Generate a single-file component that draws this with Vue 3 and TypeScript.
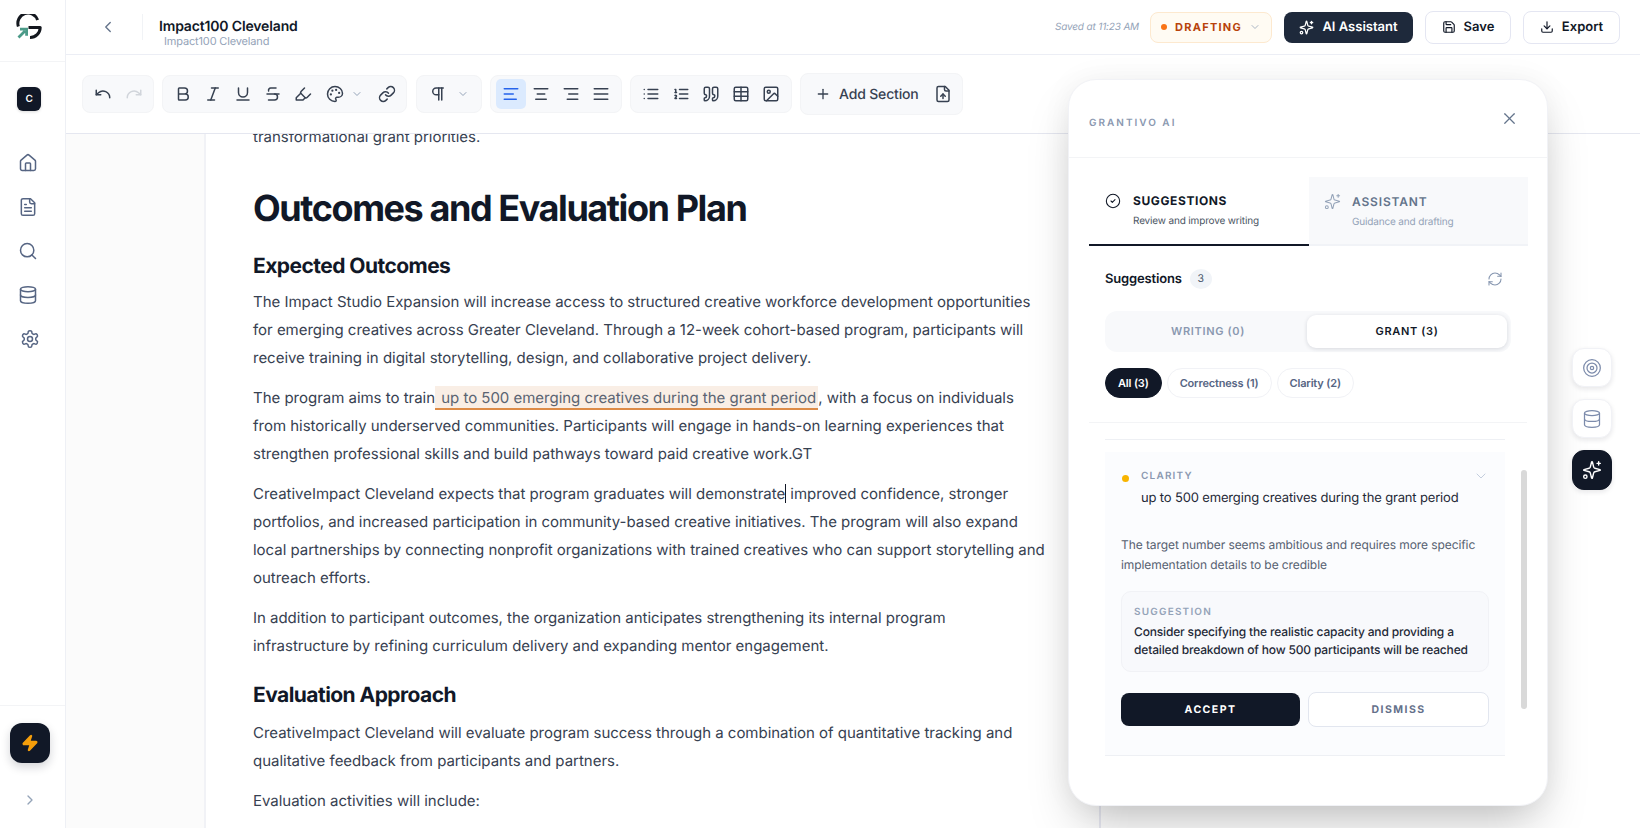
<script setup lang="ts">
import { h } from 'vue'

const c = (cx: number, cy: number, r: number) =>
  `M${cx - r} ${cy}a${r} ${r} 0 1 0 ${2 * r} 0a${r} ${r} 0 1 0 ${-2 * r} 0`

const sparkle = [
  'M9.937 15.5A2 2 0 0 0 8.5 14.063l-6.135-1.582a.5.5 0 0 1 0-.962L8.5 9.936A2 2 0 0 0 9.937 8.5l1.582-6.135a.5.5 0 0 1 .963 0L14.063 8.5A2 2 0 0 0 15.5 9.937l6.135 1.581a.5.5 0 0 1 0 .964L15.5 14.063a2 2 0 0 0-1.437 1.437l-1.582 6.135a.5.5 0 0 1-.963 0z',
  'M20 2v4', 'M22 4h-4', c(4, 20, 2),
]
const database = ['M3 5a9 3 0 1 0 18 0a9 3 0 1 0-18 0', 'M3 5V19A9 3 0 0 0 21 19V5', 'M3 12A9 3 0 0 0 21 12']

const icons: Record<string, string[]> = {
  undo: ['M3 7v6h6', 'M21 17a9 9 0 0 0-15-6.7L3 13'],
  redo: ['M21 7v6h-6', 'M3 17a9 9 0 0 1 15-6.7L21 13'],
  bold: ['M6 12h9a4 4 0 0 1 0 8H7a1 1 0 0 1-1-1V5a1 1 0 0 1 1-1h7a4 4 0 0 1 0 8'],
  italic: ['M19 4h-9', 'M14 20H5', 'M15 4 9 20'],
  underline: ['M6 4v6a6 6 0 0 0 12 0V4', 'M4 20h16'],
  strike: ['M16 4H9a3 3 0 0 0-2.83 4', 'M14 12a4 4 0 0 1 0 8H6', 'M4 12h16'],
  highlight: ['m9 11-6 6v3h9l3-3', 'm22 12-4.6 4.6a2 2 0 0 1-2.8 0l-5.2-5.2a2 2 0 0 1 0-2.8L14 4'],
  palette: [
    'M12 2C6.5 2 2 6.5 2 12s4.5 10 10 10c.926 0 1.648-.746 1.648-1.688 0-.437-.18-.835-.437-1.125-.29-.289-.438-.652-.438-1.125a1.64 1.64 0 0 1 1.668-1.668h1.996c3.051 0 5.555-2.503 5.555-5.554C21.965 6.012 17.461 2 12 2z',
    c(13.5, 6.5, 0.5), c(17.5, 10.5, 0.5), c(8.5, 7.5, 0.5), c(6.5, 12.5, 0.5),
  ],
  link: ['M10 13a5 5 0 0 0 7.54.54l3-3a5 5 0 0 0-7.07-7.07l-1.72 1.71', 'M14 11a5 5 0 0 0-7.54-.54l-3 3a5 5 0 0 0 7.07 7.07l1.71-1.71'],
  pilcrow: ['M13 4v16', 'M17 4v16', 'M19 4H9.5a4.5 4.5 0 0 0 0 9H13'],
  alignLeft: ['M3 5h18', 'M3 12h12', 'M3 19h16'],
  alignCenter: ['M3 5h18', 'M7 12h10', 'M5 19h14'],
  alignRight: ['M3 5h18', 'M9 12h12', 'M7 19h14'],
  alignJustify: ['M3 5h18', 'M3 12h18', 'M3 19h18'],
  list: ['M3 12h.01', 'M3 18h.01', 'M3 6h.01', 'M8 12h13', 'M8 18h13', 'M8 6h13'],
  ordered: ['M10 12h11', 'M10 18h11', 'M10 6h11', 'M4 10h2', 'M4 6h1v4', 'M6 18H4c0-1 2-2 2-3s-1-1.5-2-1'],
  quote: [
    'M16 3a2 2 0 0 0-2 2v6a2 2 0 0 0 2 2 1 1 0 0 1 1 1v1a2 2 0 0 1-2 2 1 1 0 0 0-1 1v2a1 1 0 0 0 1 1 6 6 0 0 0 6-6V5a2 2 0 0 0-2-2z',
    'M5 3a2 2 0 0 0-2 2v6a2 2 0 0 0 2 2 1 1 0 0 1 1 1v1a2 2 0 0 1-2 2 1 1 0 0 0-1 1v2a1 1 0 0 0 1 1 6 6 0 0 0 6-6V5a2 2 0 0 0-2-2z',
  ],
  table: ['M5 3h14a2 2 0 0 1 2 2v14a2 2 0 0 1-2 2H5a2 2 0 0 1-2-2V5a2 2 0 0 1 2-2z', 'M3 9h18', 'M3 15h18', 'M12 3v18'],
  image: ['M5 3h14a2 2 0 0 1 2 2v14a2 2 0 0 1-2 2H5a2 2 0 0 1-2-2V5a2 2 0 0 1 2-2z', c(9, 9, 2), 'm21 15-3.086-3.086a2 2 0 0 0-2.828 0L6 21'],
  plus: ['M5 12h14', 'M12 5v14'],
  fileUp: ['M15 2H6a2 2 0 0 0-2 2v16a2 2 0 0 0 2 2h12a2 2 0 0 0 2-2V7Z', 'M14 2v4a2 2 0 0 0 2 2h4', 'M12 12v6', 'm15 15-3-3-3 3'],
  sparkle,
  database,
  home: ['M15 21v-8a1 1 0 0 0-1-1h-4a1 1 0 0 0-1 1v8', 'M3 10a2 2 0 0 1 .709-1.528l7-5.999a2 2 0 0 1 2.582 0l7 5.999A2 2 0 0 1 21 10v9a2 2 0 0 1-2 2H5a2 2 0 0 1-2-2z'],
  file: ['M15 2H6a2 2 0 0 0-2 2v16a2 2 0 0 0 2 2h12a2 2 0 0 0 2-2V7Z', 'M14 2v4a2 2 0 0 0 2 2h4', 'M10 9H8', 'M16 13H8', 'M16 17H8'],
  search: [c(11, 11, 8), 'm21 21-4.3-4.3'],
  gear: [
    'M12.22 2h-.44a2 2 0 0 0-2 2v.18a2 2 0 0 1-1 1.73l-.43.25a2 2 0 0 1-2 0l-.15-.08a2 2 0 0 0-2.73.73l-.22.38a2 2 0 0 0 .73 2.73l.15.1a2 2 0 0 1 1 1.72v.51a2 2 0 0 1-1 1.74l-.15.09a2 2 0 0 0-.73 2.73l.22.38a2 2 0 0 0 2.73.73l.15-.08a2 2 0 0 1 2 0l.43.25a2 2 0 0 1 1 1.73V20a2 2 0 0 0 2 2h.44a2 2 0 0 0 2-2v-.18a2 2 0 0 1 1-1.73l.43-.25a2 2 0 0 1 2 0l.15.08a2 2 0 0 0 2.73-.73l.22-.39a2 2 0 0 0-.73-2.73l-.15-.08a2 2 0 0 1-1-1.74v-.5a2 2 0 0 1 1-1.74l.15-.09a2 2 0 0 0 .73-2.73l-.22-.38a2 2 0 0 0-2.73-.73l-.15.08a2 2 0 0 1-2 0l-.43-.25a2 2 0 0 1-1-1.73V4a2 2 0 0 0-2-2z',
    c(12, 12, 3),
  ],
  zap: ['M4 14a1 1 0 0 1-.78-1.63l9.9-10.2a.5.5 0 0 1 .86.46l-1.92 6.02A1 1 0 0 0 13 10h7a1 1 0 0 1 .78 1.63l-9.9 10.2a.5.5 0 0 1-.86-.46l1.92-6.02A1 1 0 0 0 11 14z'],
  save: ['M15.2 3a2 2 0 0 1 1.4.6l3.8 3.8a2 2 0 0 1 .6 1.4V19a2 2 0 0 1-2 2H5a2 2 0 0 1-2-2V5a2 2 0 0 1 2-2z', 'M17 21v-7a1 1 0 0 0-1-1H8a1 1 0 0 0-1 1v7', 'M7 3v4a1 1 0 0 0 1 1h7'],
  download: ['M12 15V3', 'M21 15v4a2 2 0 0 1-2 2H5a2 2 0 0 1-2-2v-4', 'm7 10 5 5 5-5'],
  target: [c(12, 12, 10), c(12, 12, 6), c(12, 12, 2)],
  refresh: ['M3 12a9 9 0 0 1 9-9 9.75 9.75 0 0 1 6.74 2.74L21 8', 'M21 3v5h-5', 'M21 12a9 9 0 0 1-9 9 9.75 9.75 0 0 1-6.74-2.74L3 16', 'M8 16H3v5'],
  check: [c(12, 12, 10), 'm9 12 2 2 4-4'],
  x: ['M18 6 6 18', 'm6 6 12 12'],
  left: ['m15 18-6-6 6-6'],
  right: ['m9 18 6-6-6-6'],
  down: ['m6 9 6 6 6-6'],
}

const Icon = (props: { name: string; size?: number; sw?: number; fill?: string }) =>
  h(
    'svg',
    {
      width: props.size ?? 18,
      height: props.size ?? 18,
      viewBox: '0 0 24 24',
      fill: props.fill ?? 'none',
      stroke: 'currentColor',
      'stroke-width': props.sw ?? 2,
      'stroke-linecap': 'round',
      'stroke-linejoin': 'round',
    },
    icons[props.name].map((d) => h('path', { d })),
  )
Icon.props = ['name', 'size', 'sw', 'fill']

const navIcons = ['home', 'file', 'search', 'database', 'gear']
</script>

<template>
  <div class="app">
    <aside class="sidebar">
      <div class="logo-cell">
        <svg width="26" height="26" viewBox="0 0 26 26" fill="none">
          <path d="M2.4 12.5A10 10 0 0 1 21.6 6" stroke="#14181f" stroke-width="3" stroke-linecap="butt" />
          <path d="M12.5 13.5H24.2A10 10 0 0 1 14 23.4" stroke="#14181f" stroke-width="3" stroke-linejoin="round" />
          <path d="M2.5 23.5 9 17M4 15.2h6.6v6.6" stroke="#4b9a88" stroke-width="2.8" stroke-linecap="butt" />
        </svg>
      </div>
      <div class="avatar">C</div>
      <nav class="nav">
        <button v-for="n in navIcons" :key="n" class="nav-btn"><Icon :name="n" :size="20" :sw="1.8" /></button>
      </nav>
      <div class="side-foot">
        <button class="bolt"><Icon name="zap" :size="18" fill="#f59e0b" /></button>
        <button class="expand"><Icon name="right" :size="16" /></button>
      </div>
    </aside>

    <main class="main">
      <header class="topbar">
        <button class="back"><Icon name="left" :size="18" :sw="1.8" /></button>
        <div class="titles">
          <div class="doc-title">Impact100 Cleveland</div>
          <div class="doc-sub">Impact100 Cleveland</div>
        </div>
        <div class="top-actions">
          <span class="saved">Saved at 11:23 AM</span>
          <button class="status"><i class="status-dot"></i>DRAFTING<Icon class="status-chev" name="down" :size="12" :sw="1.6" /></button>
          <button class="btn-dark"><Icon name="sparkle" :size="15" />AI Assistant</button>
          <button class="btn-light"><Icon name="save" :size="14" />Save</button>
          <button class="btn-light export"><Icon name="download" :size="14" />Export</button>
        </div>
      </header>

      <div class="toolbar">
        <div class="group g-history">
          <button class="tb"><Icon name="undo" /></button>
          <button class="tb muted"><Icon name="redo" /></button>
        </div>
        <div class="group g-format">
          <button class="tb"><Icon name="bold" /></button>
          <button class="tb"><Icon name="italic" /></button>
          <button class="tb"><Icon name="underline" /></button>
          <button class="tb"><Icon name="strike" /></button>
          <button class="tb"><Icon name="highlight" /></button>
          <button class="tb wide"><Icon name="palette" /><Icon class="mini" name="down" :size="12" /></button>
          <button class="tb"><Icon name="link" /></button>
        </div>
        <div class="group g-para">
          <button class="tb wide"><Icon name="pilcrow" /><Icon class="mini" name="down" :size="12" /></button>
        </div>
        <div class="group g-align">
          <button class="tb active"><Icon name="alignLeft" /></button>
          <button class="tb"><Icon name="alignCenter" /></button>
          <button class="tb"><Icon name="alignRight" /></button>
          <button class="tb"><Icon name="alignJustify" /></button>
        </div>
        <div class="group g-insert">
          <button class="tb"><Icon name="list" /></button>
          <button class="tb"><Icon name="ordered" /></button>
          <button class="tb"><Icon name="quote" /></button>
          <button class="tb"><Icon name="table" /></button>
          <button class="tb"><Icon name="image" /></button>
        </div>
        <div class="group g-add">
          <button class="add"><Icon name="plus" :size="16" />Add Section</button>
          <button class="tb"><Icon name="fileUp" /></button>
        </div>
      </div>

      <div class="canvas">
        <article class="page">
          <p class="clipped">transformational grant priorities.</p>
          <h1>Outcomes and Evaluation Plan</h1>
          <h2>Expected Outcomes</h2>
          <p>The Impact Studio Expansion will increase access to structured creative workforce development opportunities for emerging creatives across Greater Cleveland. Through a 12-week cohort-based program, participants will receive training in digital storytelling, design, and collaborative project delivery.</p>
          <p>The program aims to train<mark> up to 500 emerging creatives during the grant period</mark>, with a focus on individuals from historically underserved communities. Participants will engage in hands-on learning experiences that strengthen professional skills and build pathways toward paid creative work.GT</p>
          <p>CreativeImpact Cleveland expects that program graduates will demonstrate<span class="caret"></span> improved confidence, stronger portfolios, and increased participation in community-based creative initiatives. The program will also expand local partnerships by connecting nonprofit organizations with trained creatives who can support storytelling and outreach efforts.</p>
          <p>In addition to participant outcomes, the organization anticipates strengthening its internal program infrastructure by refining curriculum delivery and expanding mentor engagement.</p>
          <h2>Evaluation Approach</h2>
          <p>CreativeImpact Cleveland will evaluate program success through a combination of quantitative tracking and qualitative feedback from participants and partners.</p>
          <p>Evaluation activities will include:</p>
        </article>
      </div>
    </main>

    <section class="panel">
      <div class="panel-head">
        <span class="panel-name">GRANTIVO AI</span>
        <button class="panel-close"><Icon name="x" :size="19" :sw="1.5" /></button>
      </div>
      <div class="tabs">
        <div class="tab on">
          <Icon name="check" :size="16" :sw="1.6" />
          <div>
            <div class="tab-title">SUGGESTIONS</div>
            <div class="tab-sub">Review and improve writing</div>
          </div>
        </div>
        <div class="tab off">
          <Icon name="sparkle" :size="17" :sw="1.5" />
          <div>
            <div class="tab-title">ASSISTANT</div>
            <div class="tab-sub">Guidance and drafting</div>
          </div>
        </div>
      </div>
      <div class="pane">
        <div class="sugg-row">
          <span class="sugg-title">Suggestions</span>
          <span class="count">3</span>
          <button class="refresh"><Icon name="refresh" :size="16" :sw="1.6" /></button>
        </div>
        <div class="segment">
          <button class="seg">WRITING (0)</button>
          <button class="seg sel">GRANT (3)</button>
        </div>
        <div class="chips">
          <button class="chip chip-on">All (3)</button>
          <button class="chip">Correctness (1)</button>
          <button class="chip">Clarity (2)</button>
        </div>
      </div>
      <div class="list">
        <div class="scrollbar"></div>
        <div class="card">
          <div class="card-head">
            <i class="dot"></i>
            <div class="card-titles">
              <div class="card-kind">CLARITY</div>
              <div class="card-title">up to 500 emerging creatives during the grant period</div>
            </div>
            <Icon class="card-chev" name="down" :size="16" :sw="1.5" />
          </div>
          <p class="card-desc">The target number seems ambitious and requires more specific implementation details to be credible</p>
          <div class="sugg-box">
            <div class="sugg-label">SUGGESTION</div>
            <div class="sugg-text">Consider specifying the realistic capacity and providing a detailed breakdown of how 500 participants will be reached</div>
          </div>
          <div class="actions">
            <button class="accept">ACCEPT</button>
            <button class="dismiss">DISMISS</button>
          </div>
        </div>
      </div>
    </section>

    <div class="rail">
      <button class="rail-btn"><Icon name="target" :size="20" :sw="1.5" /></button>
      <button class="rail-btn"><Icon name="database" :size="20" :sw="1.5" /></button>
      <button class="rail-btn rail-on"><Icon name="sparkle" :size="20" :sw="1.7" /></button>
    </div>
  </div>
</template>

<style>
html, body { margin: 0; background: #fff; }
</style>

<style scoped>
* { box-sizing: border-box; }
button { font-family: inherit; border: 0; background: none; padding: 0; cursor: pointer; color: inherit; text-rendering: inherit; letter-spacing: inherit; }
.app {
  position: relative; display: flex; width: 1640px; height: 828px; overflow: hidden;
  font-family: Inter, "Liberation Sans", sans-serif; color: #111827; background: #fff;
  text-rendering: geometricPrecision; letter-spacing: -.16px;
}
.sidebar { width: 66px; flex: none; display: flex; flex-direction: column; align-items: center; border-right: 1px solid #eef0f5; background: #fff; }
.logo-cell { width: 100%; height: 62px; display: flex; justify-content: center; padding-top: 14px; border-bottom: 1px solid #f3f4f6; padding-right: 8px; }
.avatar { margin-top: 25px; margin-left: -7px; width: 24px; height: 24px; border-radius: 6px; background: #111827; color: #fff; font-size: 10px; font-weight: 600; display: flex; align-items: center; justify-content: center; box-shadow: 0 1px 3px rgba(0,0,0,.15); }
.nav { margin-top: 42px; margin-left: -8px; display: flex; flex-direction: column; gap: 24px; color: #566583; }
.nav-btn { width: 20px; height: 20px; display: block; }
.nav-btn:last-child { margin-left: 2px; }
.side-foot { margin-top: auto; width: 100%; border-top: 1px solid #f3f4f6; display: flex; flex-direction: column; align-items: center; padding: 17px 6px 0 0; height: 123px; }
.bolt { width: 40px; height: 40px; border-radius: 12px; background: #111827; display: flex; align-items: center; justify-content: center; color: #f59e0b; box-shadow: 0 4px 10px rgba(17,24,39,.18); }
.expand { margin-top: 29px; color: #94a3b8; height: 16px; }

.main { flex: 1; min-width: 0; display: flex; flex-direction: column; }
.topbar { height: 55px; flex: none; display: flex; align-items: center; border-bottom: 1px solid #eceef5; padding-right: 20px; }
.back { width: 18px; height: 18px; margin-left: 33px; color: #64748b; }
.titles { margin-left: 25px; padding: 4px 0 0 16px; border-left: 1px solid #f1f3f6; height: 26px; }
.doc-title { font-size: 14px; font-weight: 600; line-height: 17px; color: #111827; white-space: nowrap; }
.doc-sub { font-size: 11px; line-height: 13px; color: #94a3b8; margin-left: 5px; white-space: nowrap; }
.top-actions { margin-left: auto; display: flex; align-items: center; }
.saved { font-size: 10px; font-style: italic; color: #94a3b8; margin-right: 11px; }
.status { height: 31px; width: 122px; display: flex; align-items: center; border: 1px solid #fde9cf; background: #fffbf3; border-radius: 8px; font-size: 11px; font-weight: 700; letter-spacing: .115em; color: #b8430b; padding-left: 10px; margin-right: 12px; }
.status-dot { width: 6px; height: 6px; border-radius: 50%; background: #f97316; margin-right: 8px; }
.status-chev { margin-left: 7px; color: #94a3b8; }
.btn-dark { height: 31px; width: 129px; border-radius: 8px; background: #1e293b; color: #fff; font-size: 13px; font-weight: 600; letter-spacing: 0; display: flex; align-items: center; justify-content: center; gap: 8px; margin-right: 12px; }
.btn-light { height: 33px; width: 86px; border: 1px solid #e4e6f2; border-radius: 8px; background: #fff; color: #111827; font-size: 13px; font-weight: 600; letter-spacing: 0; display: flex; align-items: center; justify-content: center; gap: 8px; margin-right: 12px; }
.export { width: 97px; margin-right: 0; }

.toolbar { height: 79px; flex: none; display: flex; align-items: center; gap: 8px; padding-left: 16px; border-bottom: 1px solid #e5e7f0; background: #fff; }
.group { height: 38px; display: flex; align-items: center; background: #f8f9fb; border: 1px solid #f3f4f6; border-radius: 8px; color: #374151; }
.g-history { width: 72px; padding: 0 4px; justify-content: space-around; }
.g-format { width: 245px; padding-left: 5px; }
.g-para { width: 66px; margin-left: 1px; justify-content: center; }
.g-align { width: 132px; padding: 0 5px; justify-content: space-between; }
.g-insert { width: 162px; padding: 0 5px; justify-content: space-between; }
.g-add { width: 163px; height: 42px; padding: 0 4px 0 14px; justify-content: space-between; }
.tb { width: 30px; height: 30px; border-radius: 5px; display: flex; align-items: center; justify-content: center; color: #374151; flex: none; }
.tb.wide { width: 54px; justify-content: flex-start; gap: 7px; padding-left: 8px; }
.g-para .tb.wide { width: auto; gap: 10px; padding: 0 7px; }
.tb.muted { color: #d1d5db; }
.tb.active { background: #dbeafe; color: #2563eb; }
.mini { color: #94a3b8; }
.add { display: flex; align-items: center; gap: 8px; font-size: 14px; font-weight: 500; color: #374151; }

.canvas { flex: 1; min-height: 0; overflow: hidden; background: linear-gradient(to right, #fbfbfb 138px, #fff 138px); padding-left: 138px; }
.page { display: flow-root; width: 897px; height: 100%; background: #fff; border-left: 2px solid #f1f2f6; border-right: 2px solid #e9eaf3; padding: 0 53.7px 0 47px; color: #374151; font-size: 15px; line-height: 28px; letter-spacing: -.02px; }
.page p { margin: 0 0 12px; }
.page .clipped { margin: -11px 0 35px; }
.page h1 { margin: 0 0 22px; font-size: 36px; line-height: 44px; font-weight: 700; letter-spacing: -1.42px; color: #111827; }
.page h2 { margin: 0 0 7px; padding-top: 1px; font-size: 21px; line-height: 28px; font-weight: 700; letter-spacing: -.55px; color: #111827; }
.page p + h2 { margin-top: 21px; margin-bottom: 9px; }
mark { color: #5b6472; background: #f9eee5; border-bottom: 2px solid #dd8b47; padding: 2px 2px 1px; }
.caret { display: inline-block; width: 1px; height: 19px; background: #111827; vertical-align: -4px; }

.panel { position: absolute; left: 1068px; top: 79px; width: 480px; height: 727px; background: #fff; border: 1px solid #f1f2f6; border-radius: 28px; box-shadow: 0 25px 50px -12px rgba(0,0,0,.25), 0 0 30px rgba(0,0,0,.05); display: flex; flex-direction: column; overflow: hidden; }
.panel-head { height: 78px; flex: none; display: flex; justify-content: space-between; align-items: center; padding: 0 28px 0 20px; border-bottom: 1px solid #f3f4f6; }
.panel-name { font-size: 10px; font-weight: 600; letter-spacing: .2em; color: #8a98b0; margin-top: 8px; }
.panel-close { color: #64748b; height: 19px; margin-top: -1px; }
.tabs { margin: 19px 20px 0; display: grid; grid-template-columns: 220px 219px; height: 69px; flex: none; }
.tab { display: flex; gap: 12px; padding: 16px 0 0 16px; border-bottom: 2px solid #111827; }
.tab.off { background: #f8f9fb; border-bottom-color: #f1f3f7; color: #64748b; padding-left: 15px; gap: 11px; }
.tab-title { font-size: 12px; font-weight: 700; letter-spacing: .05em; line-height: 16px; color: #111827; }
.tab.off .tab-title { color: #64748b; font-weight: 600; margin-top: 1px; letter-spacing: .07em; }
.tab-sub { font-size: 10px; color: #4b5563; line-height: 14px; margin-top: 5px; }
.tab.off .tab-sub { color: #94a3b8; }
.tab.off svg { color: #94a3b8; }
.pane { margin: 0 20px; padding: 0 16px; height: 177px; flex: none; border-bottom: 1px solid #f3f4f6; }
.sugg-row { height: 65px; display: flex; align-items: center; }
.sugg-title { font-size: 13px; font-weight: 600; color: #111827; }
.count { width: 22px; height: 20px; margin-left: 8px; border-radius: 50%; background: #f1f4f8; color: #475569; font-size: 10.5px; display: flex; align-items: center; justify-content: center; }
.refresh { margin-left: auto; margin-right: 8px; height: 16px; color: #8595af; }
.segment { height: 41px; background: #f8f9fb; border-radius: 12px; padding: 4px; display: grid; grid-template-columns: 1fr 200px; }
.seg { font-size: 11px; font-weight: 600; letter-spacing: .06em; color: #8a98b0; border-radius: 9px; padding-bottom: 2px; }
.seg.sel { background: #fff; color: #111827; box-shadow: 0 1px 4px rgba(15,23,42,.14); }
.chips { display: flex; gap: 5px; margin-top: 16px; }
.chip { height: 30px; padding: 0 12px; border: 1px solid #f1f2f6; border-radius: 15px; font-size: 11px; font-weight: 600; color: #566583; background: #fff; }
.chip-on { background: #111827; color: #fff; border-color: #111827; }
.list { position: relative; flex: 1; margin: 0 20px; padding: 16px 22px 0 16px; }
.scrollbar { position: absolute; right: 0; top: 47px; width: 6px; height: 239px; border-radius: 3px; background: #d9d9d9; }
.card { border-top: 1px solid #eef0f4; border-bottom: 1px solid #eef0f4; background: linear-gradient(#fff 12px, #fbfcfe 12px); height: 317px; padding: 0 16px; }
.card-head { display: flex; padding-top: 29px; }
.dot { width: 7px; height: 7px; border-radius: 50%; background: #f8b400; margin: 6px 0 0 1px; flex: none; }
.card-titles { margin-left: 12px; flex: 1; }
.card-kind { font-size: 10px; font-weight: 600; letter-spacing: .12em; color: #8a98b0; line-height: 14px; }
.card-title { font-size: 13px; color: #1f2937; line-height: 18px; margin-top: 6px; }
.card-chev { color: #c4cede; margin-top: -1px; }
.card-desc { margin: 28px 0 0; font-size: 12px; line-height: 20px; color: #566070; letter-spacing: -.08px; }
.sugg-box { margin-top: 16px; height: 81px; border: 1px solid #f1f2f6; border-radius: 10px; background: #f8f9fc; padding: 13px 12px 0; }
.sugg-label { font-size: 10px; font-weight: 600; letter-spacing: .12em; color: #94a3b8; line-height: 14px; }
.sugg-text { font-size: 12px; font-weight: 500; line-height: 18px; color: #1f2937; margin-top: 4px; }
.actions { display: flex; align-items: center; gap: 8px; margin-top: 20px; }
.accept { width: 179px; height: 33px; border-radius: 8px; background: #111827; color: #fff; font-size: 10.5px; font-weight: 700; letter-spacing: .14em; }
.dismiss { width: 181px; height: 35px; border-radius: 8px; background: #fff; border: 1px solid #e2e6ef; color: #64708a; font-size: 10.5px; font-weight: 700; letter-spacing: .14em; }

.rail { position: absolute; left: 1572px; top: 348px; display: flex; flex-direction: column; gap: 12px; }
.rail-btn { width: 40px; height: 39px; border-radius: 12px; background: #fff; border: 1px solid #f1f2f6; box-shadow: 0 2px 5px rgba(15,23,42,.1); color: #7c8bab; display: flex; align-items: center; justify-content: center; }
.rail-on { height: 40px; background: #111827; border-color: #111827; color: #fff; }
</style>
